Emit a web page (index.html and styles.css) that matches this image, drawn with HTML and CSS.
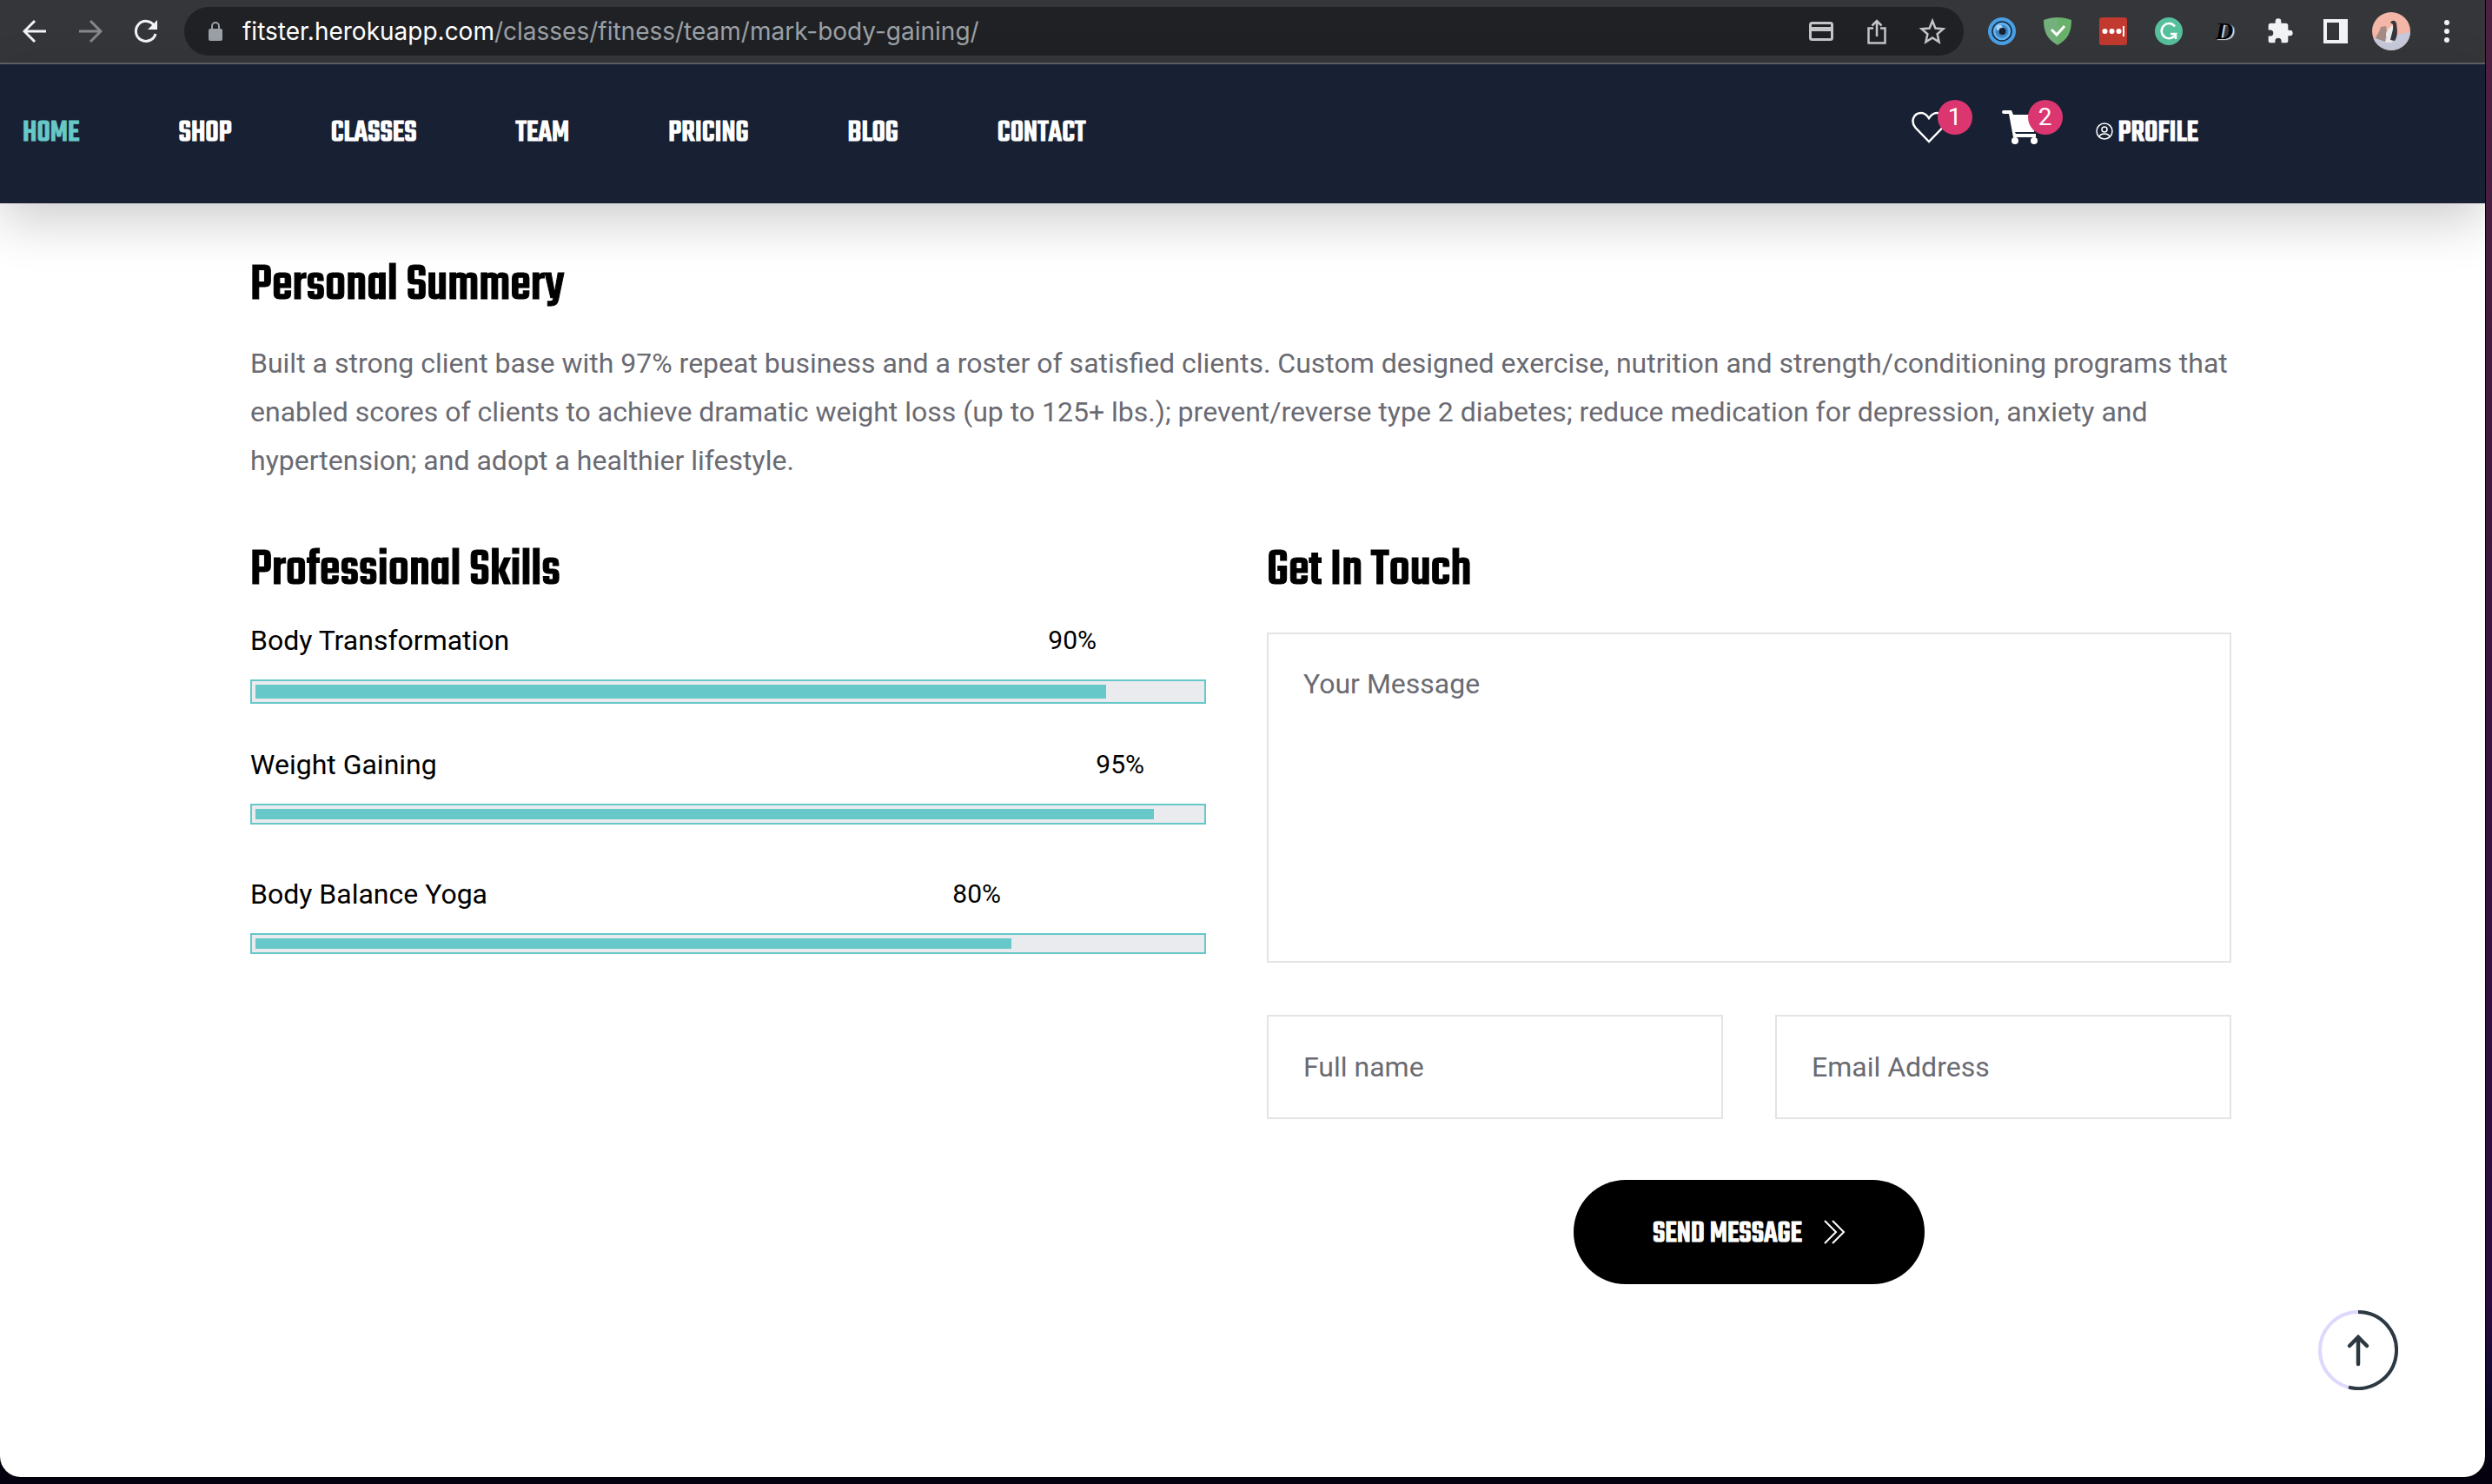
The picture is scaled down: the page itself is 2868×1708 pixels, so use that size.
FILE: index.html
```html
<!DOCTYPE html>
<html lang="en">
<head>
<meta charset="utf-8">
<title>Fitster – Mark, Body Gaining</title>
<link rel="stylesheet" href="styles.css">
</head>
<body>
<div class="window">
  <div class="toolbar">
    <button class="tool" aria-label="Back"><svg width="28" height="28" viewBox="0 0 28 28" fill="none" stroke="#f1f3f4" stroke-width="3"><path d="M27 14H2M14 2 2 14l12 12"/></svg></button>
    <button class="tool" aria-label="Forward"><svg width="28" height="28" viewBox="0 0 28 28" fill="none" stroke="#86888a" stroke-width="3"><path d="M1 14h25M14 2l12 12-12 12"/></svg></button>
    <button class="tool" aria-label="Reload"><svg width="28" height="28" viewBox="0 0 28 28"><path d="M23.500 7.500A11.500 11.500 0 1 0 25 17" fill="none" stroke="#f1f3f4" stroke-width="3"/><path d="M27 1v11H16z" fill="#f1f3f4"/></svg></button>
    <div class="address">
      <svg class="lock" width="18" height="24" viewBox="0 0 18 24"><rect x="1" y="9" width="16" height="14" rx="2" fill="#9aa0a6"/><path d="M5 10V6a4 4 0 0 1 8 0v4" fill="none" stroke="#9aa0a6" stroke-width="2"/></svg>
      <span class="url"><span class="host">fitster.herokuapp.com</span>/classes/fitness/team/mark-body-gaining/</span>
      <div class="address-tools">
        <svg width="32" height="32" viewBox="0 0 32 32" fill="none" stroke="#c4c5c7" stroke-width="3"><rect x="3.500" y="6.500" width="25" height="19" rx="2"/><path d="M3 13.500h26" stroke-width="5"/></svg>
        <svg width="32" height="32" viewBox="0 0 32 32" fill="none" stroke="#c4c5c7" stroke-width="2.500"><path d="M12 12.500H6.500v17h19v-17H20M16 22V4M10.500 9.500 16 4l5.500 5.500"/></svg>
        <svg width="32" height="32" viewBox="0 0 32 32" fill="none" stroke="#c4c5c7" stroke-width="2.500"><path d="m16 4 3.400 8.500 9 .8-6.800 6 2 9L16 23.500 8.400 28.300l2-9-6.800-6 9-.8z"/></svg>
      </div>
    </div>
    <div class="extensions">
      <svg width="32" height="32" viewBox="0 0 32 32"><circle cx="16" cy="16" r="16" fill="#4a9fe3"/><circle cx="16" cy="16" r="11" fill="#62b2f0" stroke="#12293f" stroke-width="1.500"/><circle cx="16" cy="16" r="7.500" fill="#3f86c4"/><circle cx="13" cy="12" r="3.500" fill="#a9d3f2"/><circle cx="16.500" cy="16" r="4" fill="#17222e"/></svg>
      <svg width="32" height="32" viewBox="0 0 32 32"><path d="M16 0C11 0 5 1 0 3c0 14 4 22 16 29z" fill="#74b07c"/><path d="M16 0c5 0 11 1 16 3 0 14-4 22-16 29z" fill="#69b26b"/><path d="m9 14 6 6 9-10" fill="none" stroke="#fff" stroke-width="3"/></svg>
      <svg width="32" height="32" viewBox="0 0 32 32"><rect width="32" height="32" rx="3" fill="#c1392f"/><g fill="#fff"><circle cx="6.500" cy="16" r="3"/><circle cx="14.500" cy="16" r="3"/><circle cx="22.500" cy="16" r="3"/><path d="M27 10h2v12h-2z"/></g></svg>
      <svg width="32" height="32" viewBox="0 0 32 32"><circle cx="16" cy="16" r="16" fill="#56bf9b"/><path d="M23 10.500A8.500 8.500 0 1 0 24 19h-6M24 25v-6.500" fill="none" stroke="#fff" stroke-width="2.500"/></svg>
      <span class="ext-letter">D</span>
      <svg width="32" height="32" viewBox="0 0 24 24"><path fill="#f1f3f4" d="M20.500 11H19V7a2 2 0 0 0-2-2h-4V3.500a2.500 2.500 0 0 0-5 0V5H4a2 2 0 0 0-2 2v3.800h1.500a2.700 2.700 0 0 1 0 5.400H2V20a2 2 0 0 0 2 2h3.800v-1.500a2.700 2.700 0 0 1 5.400 0V22H17a2 2 0 0 0 2-2v-4h1.500a2.500 2.500 0 0 0 0-5z"/></svg>
      <svg width="32" height="32" viewBox="0 0 32 32"><path fill="#f1f3f4" fill-rule="evenodd" d="M2 2h28v28H2zM6 6v20h14V6z"/></svg>
      <svg class="avatar" width="44" height="44" viewBox="0 0 44 44"><defs><clipPath id="av"><circle cx="22" cy="22" r="22"/></clipPath></defs><g clip-path="url(#av)"><path fill="#f4b6a6" d="M0 0h44v44H0z"/><path fill="#c6cada" d="m0 31 44-8v21H0z"/><path fill="#a58a86" d="M4 30c2-5 5-8 6-13l6-1 1 6-2 12z"/><path fill="#e9e9ea" d="M23 15c-5 5-9 9-6 14l-2 6h8l4-12z"/><path fill="#35363b" d="M21 12c2-3 6-3 7 1 1 7 2 14-2 20l-5-1c1-6 4-12 3-18z"/></g></svg>
      <svg width="32" height="32" viewBox="0 0 32 32" fill="#f1f3f4"><circle cx="16" cy="6" r="3"/><circle cx="16" cy="16" r="3"/><circle cx="16" cy="26" r="3"/></svg>
    </div>
  </div>

  <header class="site-header">
    <nav class="menu">
      <a class="active" href="#">HOME</a>
      <a href="#">SHOP</a>
      <a href="#">CLASSES</a>
      <a href="#">TEAM</a>
      <a href="#">PRICING</a>
      <a href="#">BLOG</a>
      <a href="#">CONTACT</a>
    </nav>
    <div class="account">
      <a class="counter" href="#" aria-label="Wishlist"><svg width="40" height="40" viewBox="0 0 40 40"><path d="M20 37 4.500 21C-2 13 3 4 11 4c4 0 7 3 9 6 2-3 5-6 9-6 8 0 13 9 6.500 17z" fill="none" stroke="#fff" stroke-width="2.500"/></svg><span class="badge">1</span></a>
      <a class="counter" href="#" aria-label="Cart"><svg width="44" height="40" viewBox="0 0 44 40" fill="#fff"><path d="M2 1h9l2 5h28l-4 20H15l1 2h23v4H13L8 5H2a2 2 0 0 1 0-4z"/><circle cx="15" cy="36" r="4"/><circle cx="37" cy="36" r="4"/></svg><span class="badge">2</span></a>
      <a class="profile" href="#"><svg width="20" height="20" viewBox="0 0 20 20" fill="none" stroke="#fff" stroke-width="1.500"><circle cx="10" cy="10" r="9"/><circle cx="10" cy="8" r="3"/><path d="M4 16c2-4 10-4 12 0"/></svg>PROFILE</a>
    </div>
  </header>

  <main class="content">
    <section class="summary">
      <h2>Personal Summery</h2>
      <p>Built a strong client base with 97% repeat business and a roster of satisfied clients. Custom designed exercise, nutrition and strength/conditioning programs that enabled scores of clients to achieve dramatic weight loss (up to 125+ lbs.); prevent/reverse type 2 diabetes; reduce medication for depression, anxiety and hypertension; and adopt a healthier lifestyle.</p>
    </section>
    <div class="columns">
      <section class="skills">
        <h2>Professional Skills</h2>
        <div class="skill skill-large">
          <div class="skill-head"><span>Body Transformation</span><span class="percent" style="width:90%">90%</span></div>
          <div class="track"><div class="fill" style="width:90%"></div></div>
        </div>
        <div class="skill">
          <div class="skill-head"><span>Weight Gaining</span><span class="percent" style="width:95%">95%</span></div>
          <div class="track"><div class="fill" style="width:95%"></div></div>
        </div>
        <div class="skill">
          <div class="skill-head"><span>Body Balance Yoga</span><span class="percent" style="width:80%">80%</span></div>
          <div class="track"><div class="fill" style="width:80%"></div></div>
        </div>
      </section>
      <section class="contact">
        <h2>Get In Touch</h2>
        <form class="form">
          <textarea aria-label="Your Message" placeholder="Your Message"></textarea>
          <div class="fields">
            <input type="text" aria-label="Full name" placeholder="Full name">
            <input type="email" aria-label="Email Address" placeholder="Email Address">
          </div>
          <button class="send" type="button"><span class="send-label">SEND MESSAGE</span><svg width="26" height="28" viewBox="0 0 26 28" fill="none" stroke="#fff" stroke-width="2"><path d="m2 1 13 13L2 27M11 1l13 13-13 13"/></svg></button>
        </form>
      </section>
    </div>
  </main>
  <button class="to-top" aria-label="Back to top"><svg width="92" height="92" viewBox="0 0 92 92" fill="none"><circle cx="46" cy="46" r="44" stroke="#dfd8fd" stroke-width="4"/><path d="M46 2a44 44 0 1 1-11 86.600" stroke="#2c3941" stroke-width="4"/><path d="M46 62V31M36 41l10-10 10 10" stroke="#2c3941" stroke-width="4.500" stroke-linecap="round"/></svg></button>
</div>
</body>
</html>
```
FILE: styles.css
```css
:root {
  --display: Teko, Roboto, sans-serif;
}

* { box-sizing: border-box; }

body {
  margin: 0;
  min-height: 100vh;
  padding: 0 8px 8px 0;
  display: flex;
  background: linear-gradient(to bottom, #4d2140, #2a0a40 88%, #170a38 92%, #05010f 99%);
  font-family: Roboto, sans-serif;
  font-size: 32px;
  color: #000;
}

a { color: inherit; text-decoration: none; }
button { padding: 0; border: 0; background: none; font: inherit; cursor: pointer; }
svg { display: block; flex: none; }

.window {
  flex: 1;
  position: relative;
  background: #fff;
  border-radius: 0 0 24px 24px;
  box-shadow: 0 0 0 1px #000;
  overflow: hidden;
}

/* Browser toolbar */
.toolbar {
  display: flex;
  align-items: center;
  height: 74px;
  padding: 0 28px 0 26px;
  background: #35363a;
  border-bottom: 2px solid #5f6064;
}
.tool { margin-right: 36px; }
.address {
  flex: 1;
  display: flex;
  align-items: center;
  height: 56px;
  margin-left: -6px;
  padding: 0 20px 0 27px;
  border-radius: 28px;
  background: #202124;
}
.url {
  flex: 1;
  margin-left: 22px;
  font-family: Inter, sans-serif;
  font-size: 28px;
  color: #9aa0a6;
}
.host { color: #fff; }
.address-tools { display: flex; gap: 32px; }
.extensions { display: flex; align-items: center; gap: 32px; margin-left: 28px; }
.ext-letter {
  width: 32px;
  text-align: center;
  font: italic bold 28px/32px "Liberation Serif", serif;
  color: #000;
  text-shadow: 2px 1px 1px #ddd;
}
.avatar { margin: 0 -6px; }

/* Site header */
.site-header {
  position: relative;
  display: flex;
  justify-content: space-between;
  align-items: center;
  height: 160px;
  padding: 0 330px 0 26px;
  background: #182033;
  color: #fff;
  box-shadow: 0 20px 60px rgba(0, 0, 0, 0.2);
  font: 500 36px/40px var(--display);
  -webkit-text-stroke: 1px;
}
.menu { display: flex; gap: 114px; }
.active { color: #66c8c8; }
.account { display: flex; align-items: center; gap: 64px; }
.counter { position: relative; padding-bottom: 16px; }
.badge {
  position: absolute;
  top: -11px;
  left: 30px;
  width: 40px;
  border-radius: 20px;
  background: #dc3670;
  text-align: center;
  font: 28px/40px Roboto, sans-serif;
  -webkit-text-stroke: 0;
}
.profile { display: flex; align-items: center; gap: 6px; }
.profile svg { margin-bottom: 6px; }

/* Page content */
.content { padding: 60px 292px 0 288px; }
h2 {
  margin: 0;
  font: 500 60px/72px var(--display);
  -webkit-text-stroke: 1px;
}
p { margin: 24px 0 0; line-height: 56px; color: #6a6a72; }
.columns { display: flex; gap: 70px; margin-top: 64px; }
.skills { flex: 110; }
.contact { flex: 111; }

.skill { padding-bottom: 29px; }
.skill-large { padding-bottom: 19px; }
.skill-head { position: relative; line-height: 40px; padding: 31px 0 25px; }
.skill-large .skill-head { padding-top: 23px; }
.percent {
  position: absolute;
  left: 0;
  padding-right: 16px;
  text-align: right;
  font-size: 30px;
}
.track {
  padding: 4px;
  border: 2px solid #66c8c8;
  background: #eaebef;
}
.fill { height: 12px; background: #66c8c8; }
.skill-large .fill { height: 16px; }

.form { display: flex; flex-direction: column; margin-top: 34px; }
textarea, input {
  width: 100%;
  border: 2px solid #e4e4e6;
  padding: 0 40px;
  font: 32px/38px Roboto, sans-serif;
  background: #fff;
}
textarea { height: 380px; padding-top: 38px; resize: none; }
input { height: 120px; }
::placeholder { color: #6a6a72; opacity: 1; }
.fields { display: flex; gap: 60px; margin-top: 60px; }
.send {
  display: flex;
  align-items: center;
  align-self: center;
  justify-content: center;
  gap: 24px;
  width: 404px;
  height: 120px;
  margin-top: 70px;
  border-radius: 60px;
  background: #000;
  color: #fff;
  font: 500 36px/40px var(--display);
  -webkit-text-stroke: 1px;
}
.send-label { padding-top: 6px; }

.to-top { position: absolute; right: 100px; bottom: 100px; }
```
